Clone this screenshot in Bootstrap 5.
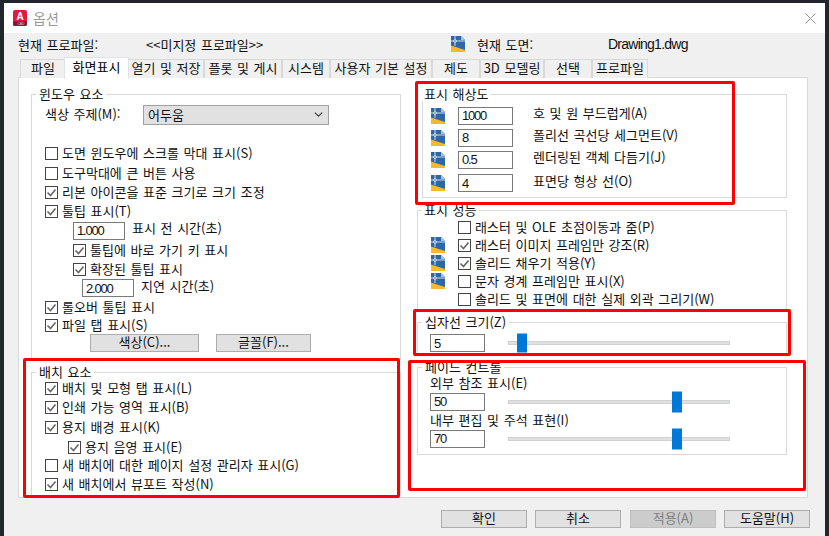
<!DOCTYPE html>
<html lang="ko">
<head>
  <meta charset="UTF-8">
  <title>옵션</title>
  <meta name="viewport" content="width=device-width, initial-scale=1" />
  <link href="https://cdn.jsdelivr.net/npm/bootstrap@5.3.0/dist/css/bootstrap.min.css" rel="stylesheet" />
  <style>
    html, body {
      height: 100%;
      overflow: hidden;
      background-color: #22262c;
    }

    body {
      font-family: "Noto Sans CJK KR", "Liberation Sans", sans-serif;
      font-size: 13px;
      line-height: 1;
      word-spacing: 1px;
      color: #111;
    }

    .dialog {
      width: 821px;
      height: 533px;
      margin: 3px 0 0 4px;
      background-color: #f0f0f0;
    }

    .title-bar { height: 30px; background-color: #fff; padding: 0 9px; }
    .title-text { margin-left: 6px; font-size: 14px; color: #9a9a9a; }
    .close-x { margin-left: auto; }

    .profile-row { height: 24px; padding-left: 14px; padding-bottom: 2px; }
    .profile-name { width: 128px; }
    .profile-value { width: 305px; }
    .drawing-label { width: 131px; margin-left: 12px; }
    .latin { font-family: "Liberation Sans", sans-serif; font-size: 14px; letter-spacing: -.75px; word-spacing: 0; }

    .opt-tabs { height: 21px; margin-left: 16px; border: 0; position: relative; z-index: 1; }
    .opt-tabs .nav-link {
      height: 19px;
      margin: 2px 0 0;
      padding: 0;
      border: 1px solid #d9d9d9;
      border-bottom: 0;
      border-radius: 0;
      background-color: #f0f0f0;
      color: #111;
      text-align: center;
      line-height: 15px;
    }
    .opt-tabs .nav-link.active {
      height: 22px;
      margin: 0 -1px 0 -2px;
      background-color: #fff;
      position: relative;
      line-height: 17px;
    }
    .opt-tabs .nav-item:nth-child(1) { width: 46px; }
    .opt-tabs .nav-item:nth-child(2) { width: 62px; }
    .opt-tabs .nav-item:nth-child(3) { width: 76px; }
    .opt-tabs .nav-item:nth-child(4) { width: 78px; }
    .opt-tabs .nav-item:nth-child(5) { width: 48px; }
    .opt-tabs .nav-item:nth-child(6) { width: 102px; }
    .opt-tabs .nav-item:nth-child(7) { width: 48px; }
    .opt-tabs .nav-item:nth-child(8) { width: 64px; }
    .opt-tabs .nav-item:nth-child(9) { width: 48px; }
    .opt-tabs .nav-item:nth-child(10) { width: 56px; }

    .opt-panel {
      width: 790px;
      height: 421px;
      margin: -1px 0 0 14px;
      padding: 9px 12px 0;
      background-color: #fff;
      border: 1px solid #d9d9d9;
    }

    .opt-col-left { width: 370px; }
    .opt-col-right { width: 370px; margin-left: 16px; }

    .opt-group {
      margin: 0;
      padding: 0 0 0 13px;
      border: 1px solid #d9d9d9;
    }
    .opt-group legend {
      float: none;
      width: auto;
      margin: 0;
      padding: 0 3px;
      font-size: 13px;
      line-height: 14px;
    }
    .group-window { height: 273px; padding-top: 3px; }
    .group-layout { height: 131px; margin-top: 5px; }
    .group-res { height: 111px; margin-left: 5px; padding-left: 8px; padding-top: 4px; }
    .group-perf { height: 109px; margin-top: 5px; padding-top: 1px; }
    .group-cross { height: 41px; margin-top: 3px; padding-left: 12px; padding-top: 4px; }
    .group-fade { height: 95px; margin-top: 4px; padding-left: 12px; }
    .opt-group.group-window legend, .opt-group.group-layout legend { margin-left: -9px; }
    .opt-group.group-res legend, .opt-group.group-perf legend { margin-left: -10px; }
    .opt-group.group-cross legend, .opt-group.group-fade legend { margin-left: -8px; }

    .line { display: flex; align-items: center; }
    .line > span:not(.pic-slot) { margin-bottom: 2px; }
    .line > span.label-up { margin-bottom: 6px; }
    .h17 { height: 17px; }
    .h18 { height: 18px; }
    .h19 { height: 19px; }
    .h20 { height: 20px; }
    .h21 { height: 21px; }
    .h22 { height: 22px; }
    .h23 { height: 23px; }
    .h26 { height: 26px; }
    .gap-after-combo { margin-bottom: 18px; }

    .form-check-input.opt-check {
      flex: none;
      width: 13px;
      height: 13px;
      margin: 0 4px 0 0;
      border: 1px solid #444;
      border-radius: 0;
      background-color: #fff;
    }
    .form-check-input.opt-check:checked {
      background-color: #fff;
      border-color: #444;
      background-size: 11px;
      background-image: url("data:image/svg+xml,%3csvg xmlns='http://www.w3.org/2000/svg' viewBox='0 0 11 11'%3e%3cpath fill='none' stroke='%23666' stroke-width='1.6' d='M1.5 5.5l3 3 5-6'/%3e%3c/svg%3e");
    }

    .form-control.opt-input {
      flex: none;
      width: 55px;
      height: 18px;
      min-height: 0;
      padding: 0 3px;
      border: 1px solid #7a7a7a;
      border-radius: 0;
      background-color: #fff;
      color: #111;
      font-family: "Liberation Sans", sans-serif;
      font-size: 13px;
      letter-spacing: -1.2px;
      line-height: 16px;
    }
    .form-control.input-short { width: 52px; }

    .form-select.opt-combo {
      width: 186px;
      height: 20px;
      min-height: 0;
      padding: 0 4px;
      border: 1px solid #a0a0a0;
      border-radius: 0;
      background-color: #e1e1e1;
      background-position: right 4px center;
      background-size: 11px 9px;
      color: #111;
      font-size: 13px;
      line-height: 16px;
    }
    .combo-label { width: 98px; }

    .btn.opt-btn {
      height: 18px;
      padding: 0 0 2px;
      border: 1px solid #adadad;
      border-radius: 0;
      background-color: #e1e1e1;
      color: #111;
      font-size: 13px;
      line-height: 14px;
      word-spacing: 1px;
    }
    .btn.opt-btn:disabled {
      background-color: #cccccc;
      border-color: #bfbfbf;
      color: #7f7f7f;
      opacity: 1;
    }
    .btn-color { width: 109px; margin-left: 45px; }
    .btn-font { width: 95px; margin-left: 17px; }
    .footer-btn { width: 86px; }
    .footer-apply { margin-left: 1px; }
    .opt-footer { gap: 8px; padding: 12px 15px 0 0; }

    .indent-tip { margin-left: 28px; }
    .indent-delay { margin-left: 37px; }
    .indent-paper { margin-left: 23px; }
    .after-short { margin-left: 7px; }
    .after-input { margin-left: 20px; }
    .before-input { margin-left: 13px; }
    .pic-slot { flex: none; width: 14px; height: 16px; }
    .pic-slot-gap { margin-right: 13px; }

    .track {
      position: relative;
      flex: none;
      width: 222px;
      height: 4px;
      margin-left: 23px;
      background-color: #dfe1e1;
      border: 1px solid #d0d2d2;
    }
    .thumb {
      position: absolute;
      top: 50%;
      width: 10px;
      height: 21px;
      transform: translateY(-50%);
      background-color: #0078d7;
    }
    .group-cross .thumb { height: 19px; }

    .mark-box {
      position: absolute;
      border: 3px solid #f00;
      border-radius: 2px;
      pointer-events: none;
      z-index: 5;
    }
    .mark-res { left: 415px; top: 81px; width: 320px; height: 124px; }
    .mark-cross { left: 413px; top: 309px; width: 378px; height: 47px; }
    .mark-fade { left: 408px; top: 360px; width: 398px; height: 131px; }
    .mark-layout { left: 23px; top: 358px; width: 377px; height: 140px; }
  </style>
</head>
<body>
  <svg width="0" height="0" class="position-absolute">
    <symbol id="dwg" viewBox="0 0 14 16">
      <path fill="#2f66a8" d="M0 0H10L14 4V16H0Z"/>
      <path fill="#a9c1dc" d="M10 0L14 4H10Z"/>
      <path fill="#f6b92b" d="M0 9.500L14 14V16H0Z"/>
      <path fill="#fff" fill-opacity=".75" d="M3.500 0H4.500V10H3.500ZM0 4.500H14V5.500H0Z"/>
      <circle cx="4" cy="5" r="1.300" fill="#2f66a8" stroke="#fff" stroke-width=".8"/>
    </symbol>
  </svg>

  <div class="dialog d-flex flex-column">
    <div class="title-bar d-flex align-items-center">
      <svg width="14" height="16" viewBox="0 0 14 16">
        <rect width="14" height="16" rx="2" fill="#dc1c42"/>
        <path fill="#8a1233" d="M0 11.500H14V14a2 2 0 0 1-2 2H2a2 2 0 0 1-2-2Z"/>
        <text x="7" y="10" text-anchor="middle" fill="#fff" font-family="Liberation Sans" font-weight="700" font-size="10">A</text>
        <text x="8" y="15" text-anchor="middle" fill="#f3c6d0" font-family="Liberation Sans" font-size="3.4">CAD</text>
      </svg>
      <span class="title-text">옵션</span>
      <svg class="close-x" width="11" height="11" viewBox="0 0 11 11">
        <path fill="none" stroke="#9a9a9a" d="M.5.5l10 10M10.500.5l-10 10"/>
      </svg>
    </div>

    <div class="profile-row d-flex align-items-center">
      <span class="profile-name">현재 프로파일:</span>
      <span class="profile-value">&lt;&lt;미지정 프로파일&gt;&gt;</span>
      <svg class="pic-slot"><use href="#dwg"/></svg>
      <span class="drawing-label">현재 도면:</span>
      <span class="latin">Drawing1.dwg</span>
    </div>

    <ul class="nav nav-tabs opt-tabs flex-nowrap">
      <li class="nav-item"><a class="nav-link" href="#">파일</a></li>
      <li class="nav-item"><a class="nav-link active" href="#">화면표시</a></li>
      <li class="nav-item"><a class="nav-link" href="#">열기 및 저장</a></li>
      <li class="nav-item"><a class="nav-link" href="#">플롯 및 게시</a></li>
      <li class="nav-item"><a class="nav-link" href="#">시스템</a></li>
      <li class="nav-item"><a class="nav-link" href="#">사용자 기본 설정</a></li>
      <li class="nav-item"><a class="nav-link" href="#">제도</a></li>
      <li class="nav-item"><a class="nav-link" href="#">3D 모델링</a></li>
      <li class="nav-item"><a class="nav-link" href="#">선택</a></li>
      <li class="nav-item"><a class="nav-link" href="#">프로파일</a></li>
    </ul>

    <div class="opt-panel d-flex">
      <div class="opt-col-left">
        <fieldset class="opt-group group-window">
          <legend>윈도우 요소</legend>
          <div class="line h21 gap-after-combo">
            <span class="combo-label">색상 주제(M):</span>
            <select class="form-select opt-combo"><option>어두움</option></select>
          </div>
          <div class="line h20"><input class="form-check-input opt-check" type="checkbox"><span>도면 윈도우에 스크롤 막대 표시(S)</span></div>
          <div class="line h20"><input class="form-check-input opt-check" type="checkbox"><span>도구막대에 큰 버튼 사용</span></div>
          <div class="line h19"><input class="form-check-input opt-check" type="checkbox" checked><span>리본 아이콘을 표준 크기로 크기 조정</span></div>
          <div class="line h19"><input class="form-check-input opt-check" type="checkbox" checked><span>툴팁 표시(T)</span></div>
          <div class="line h19 indent-tip"><input class="form-control opt-input input-short" value="1.000"><span class="after-short label-up">표시 전 시간(초)</span></div>
          <div class="line h20 indent-tip"><input class="form-check-input opt-check" type="checkbox" checked><span>툴팁에 바로 가기 키 표시</span></div>
          <div class="line h19 indent-tip"><input class="form-check-input opt-check" type="checkbox" checked><span>확장된 툴팁 표시</span></div>
          <div class="line h18 indent-delay"><input class="form-control opt-input input-short" value="2.000"><span class="after-short label-up">지연 시간(초)</span></div>
          <div class="line h20"><input class="form-check-input opt-check" type="checkbox" checked><span>롤오버 툴팁 표시</span></div>
          <div class="line h17"><input class="form-check-input opt-check" type="checkbox" checked><span>파일 탭 표시(S)</span></div>
          <div class="line h18">
            <button class="btn opt-btn btn-color" type="button">색상(C)...</button>
            <button class="btn opt-btn btn-font" type="button">글꼴(F)...</button>
          </div>
        </fieldset>

        <fieldset class="opt-group group-layout">
          <legend>배치 요소</legend>
          <div class="line h19"><input class="form-check-input opt-check" type="checkbox" checked><span>배치 및 모형 탭 표시(L)</span></div>
          <div class="line h18"><input class="form-check-input opt-check" type="checkbox" checked><span>인쇄 가능 영역 표시(B)</span></div>
          <div class="line h22"><input class="form-check-input opt-check" type="checkbox" checked><span>용지 배경 표시(K)</span></div>
          <div class="line h19 indent-paper"><input class="form-check-input opt-check" type="checkbox" checked><span>용지 음영 표시(E)</span></div>
          <div class="line h17"><input class="form-check-input opt-check" type="checkbox"><span>새 배치에 대한 페이지 설정 관리자 표시(G)</span></div>
          <div class="line h20"><input class="form-check-input opt-check" type="checkbox" checked><span>새 배치에서 뷰포트 작성(N)</span></div>
        </fieldset>
      </div>

      <div class="opt-col-right">
        <fieldset class="opt-group group-res">
          <legend>표시 해상도</legend>
          <div class="line h21"><svg class="pic-slot"><use href="#dwg"/></svg><input class="form-control opt-input before-input" value="1000"><span class="after-input label-up">호 및 원 부드럽게(A)</span></div>
          <div class="line h23"><svg class="pic-slot"><use href="#dwg"/></svg><input class="form-control opt-input before-input" value="8"><span class="after-input label-up">폴리선 곡선당 세그먼트(V)</span></div>
          <div class="line h21"><svg class="pic-slot"><use href="#dwg"/></svg><input class="form-control opt-input before-input" value="0.5"><span class="after-input label-up">렌더링된 객체 다듬기(J)</span></div>
          <div class="line h26"><svg class="pic-slot"><use href="#dwg"/></svg><input class="form-control opt-input before-input" value="4"><span class="after-input label-up">표면당 형상 선(O)</span></div>
        </fieldset>

        <fieldset class="opt-group group-perf">
          <legend>표시 성능</legend>
          <div class="line h18"><span class="pic-slot pic-slot-gap"></span><input class="form-check-input opt-check" type="checkbox"><span>래스터 및 OLE 초점이동과 줌(P)</span></div>
          <div class="line h18"><svg class="pic-slot pic-slot-gap"><use href="#dwg"/></svg><input class="form-check-input opt-check" type="checkbox" checked><span>래스터 이미지 프레임만 강조(R)</span></div>
          <div class="line h18"><svg class="pic-slot pic-slot-gap"><use href="#dwg"/></svg><input class="form-check-input opt-check" type="checkbox" checked><span>솔리드 채우기 적용(Y)</span></div>
          <div class="line h18"><svg class="pic-slot pic-slot-gap"><use href="#dwg"/></svg><input class="form-check-input opt-check" type="checkbox"><span>문자 경계 프레임만 표시(X)</span></div>
          <div class="line h18"><span class="pic-slot pic-slot-gap"></span><input class="form-check-input opt-check" type="checkbox"><span>솔리드 및 표면에 대한 실제 외곽 그리기(W)</span></div>
        </fieldset>

        <fieldset class="opt-group group-cross">
          <legend>십자선 크기(Z)</legend>
          <div class="line h20"><input class="form-control opt-input" value="5"><div class="track"><div class="thumb" style="left: 8px"></div></div></div>
        </fieldset>

        <fieldset class="opt-group group-fade">
          <legend>페이드 컨트롤</legend>
          <div class="line h18"><span>외부 참조 표시(E)</span></div>
          <div class="line h19"><input class="form-control opt-input" value="50"><div class="track"><div class="thumb" style="left: 163px"></div></div></div>
          <div class="line h18"><span>내부 편집 및 주석 표현(I)</span></div>
          <div class="line h19"><input class="form-control opt-input" value="70"><div class="track"><div class="thumb" style="left: 163px"></div></div></div>
        </fieldset>
      </div>
    </div>

    <div class="opt-footer d-flex justify-content-end">
      <button class="btn opt-btn footer-btn" type="button">확인</button>
      <button class="btn opt-btn footer-btn" type="button">취소</button>
      <button class="btn opt-btn footer-btn footer-apply" type="button" disabled>적용(A)</button>
      <button class="btn opt-btn footer-btn" type="button">도움말(H)</button>
    </div>
  </div>

  <div class="mark-box mark-res"></div>
  <div class="mark-box mark-cross"></div>
  <div class="mark-box mark-fade"></div>
  <div class="mark-box mark-layout"></div>

  <script src="https://cdn.jsdelivr.net/npm/bootstrap@5.3.0/dist/js/bootstrap.bundle.min.js"></script>
</body>
</html>
